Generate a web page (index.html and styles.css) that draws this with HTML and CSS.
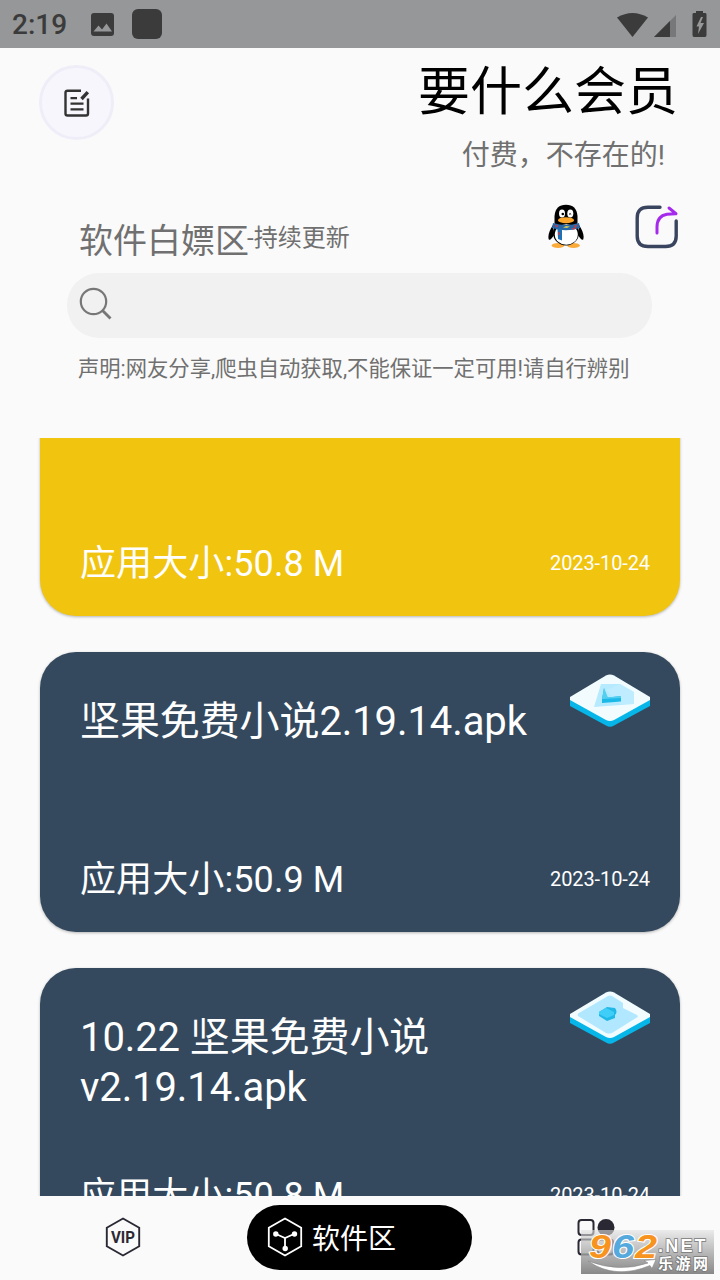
FILE: index.html
```
<!DOCTYPE html>
<html lang="zh-CN">

<head>
    <meta charset="utf-8" />
    <title>软件区</title>
    <meta name="viewport" content="width=device-width, initial-scale=1">
    <link rel="stylesheet" href="styles.css">
</head>

<body>
    <div class="statusbar">
        <span class="clock">2:19</span>
        <svg class="st-image" width="24" height="24" viewBox="0 0 24 24">
            <rect x="1" y="1" width="23" height="23" rx="3" fill="#3b3b3b" />
            <path d="M3.5 19.5l5-6 3.5 4 4.5-6 5.500 8z" fill="#969798" />
        </svg>
        <span class="st-block"></span>
        <svg class="st-right" width="92" height="28" viewBox="0 0 92 28">
            <path d="M0 7.500Q15.500-1.500 31 7.500L15.500 27z" fill="#3b3b3b" />
            <path d="M59 5v22H37z" fill="#77787a" />
            <path d="M53 11v16H37z" fill="#3b3b3b" />
            <path d="M76.500 3H79V1h7v2H88.500q1 0 1 1.500v20.500q0 2-1.500 2H77q-1.500 0-1.500-2V4.500q0-1.500 1-1.500z" fill="#3b3b3b" />
            <path d="M84 7l-4.500 9.500h2.500l-1 7.500 6-11h-3.500l2.500-6z" fill="#969798" />
        </svg>
    </div>

    <div class="header">
        <div class="note-btn">
            <svg width="28" height="30" viewBox="0 0 28 30" fill="none" stroke="#333" stroke-width="2.400">
                <path d="M18 2.700H4.500Q2.500 2.700 2.500 4.500V25.500Q2.500 27.500 4.500 27.500H23Q25 27.500 25 25.500V10.500" />
                <path d="M7.500 10.200h6.500M7.500 15.700h13M7.500 21.300h13" stroke-width="2.200" />
                <path d="M18.500 11l6.300-6.800" stroke-width="3.400" />
            </svg>
        </div>
        <div class="heading">
            <h1>要什么会员</h1>
            <p>付费，不存在的!</p>
        </div>
    </div>

    <div class="section-row">
        <div class="section-title">软件白嫖区<small>-持续更新</small></div>
        <svg class="penguin" width="36" height="45" viewBox="0 0 36 45">
            <ellipse cx="10" cy="41.600" rx="6.300" ry="2.500" fill="#fbab3a" />
            <ellipse cx="25.500" cy="41.600" rx="6.300" ry="2.500" fill="#fbab3a" />
            <path d="M5 21Q-1 30 .8 35.500Q2.500 37 6 31zM31 21Q37 30 35.200 35.500Q33.500 37 30 31z" fill="#000" />
            <ellipse cx="18" cy="29" rx="13" ry="12.500" fill="#000" />
            <path d="M6.500 19V12Q7.500.8 18 .8T29.500 12V19Q29 25 18 25T6.500 19z" fill="#000" />
            <ellipse cx="18.300" cy="30.500" rx="11.500" ry="10.300" fill="#fff" />
            <path d="M5 19Q18 23 31 19L32 24Q18 28.500 4 24z" fill="#2866a5" />
            <path d="M9.500 24l4.500 1.500v11l-4-1.500z" fill="#1f70b5" />
            <path d="M7 21.500l3 1M26 22.500l3-1M11 28v3M24 25l4-1" stroke="#b84352" stroke-width="1.600" />
            <path d="M15 23.500l3-1.500 4 .5-3 1.500z" fill="#d5c957" />
            <ellipse cx="14" cy="9.600" rx="3" ry="4" fill="#fff" />
            <ellipse cx="22.300" cy="9.600" rx="3" ry="4" fill="#fff" />
            <circle cx="14.800" cy="10" r="1.300" fill="#000" />
            <path d="M21 10.500q1-2 2.200 0" stroke="#000" fill="none" />
            <ellipse cx="18" cy="16.200" rx="8" ry="3" fill="#faa52b" />
        </svg>
        <svg class="share" width="44" height="44" viewBox="0 0 44 44" fill="none" stroke-width="3.400" stroke-linecap="round" stroke-linejoin="round">
            <path d="M25 2.200H13Q2.200 2.200 2.200 13V31Q2.200 41.500 13 41.500H30.500Q41.200 41.500 41.200 31V16" stroke="#39445f" />
            <path d="M22 28V22Q22 11 32 9.300L40.500 8.700M34 3l7 5.700" stroke="#a52bec" stroke-width="3" />
        </svg>
    </div>

    <div class="search">
        <svg width="34" height="34" viewBox="0 0 34 34" fill="none" stroke="#777">
            <circle cx="14.500" cy="14.500" r="12.700" stroke-width="2.200" />
            <path d="M23.500 23.500l8 8" stroke-width="2.800" />
        </svg>
    </div>
    <p class="notice">声明:网友分享,爬虫自动获取,不能保证一定可用!请自行辨别</p>

    <div class="list">
        <div class="card yellow">
            <div class="card-foot"><span class="size">应用大小:50.8 M</span><span class="date">2023-10-24</span></div>
        </div>
        <div class="card">
            <div class="card-head">
                <div class="name">坚果免费小说2.19.14.apk</div>
                <svg width="80" height="54" viewBox="0 0 80 54">
                    <path d="M0 24L36 2Q40 0 44 2L80 24V32L44 51.500Q40 54 36 51.500L0 32z" fill="#06b6e8" />
                    <path d="M0 23L36 1.500Q40-.5 44 1.500L80 23V26L44 46Q40 48 36 46L0 26z" fill="#f2fcff" />
                    <path d="M31 10H50L64 18V30L24 33z" fill="#b5eaff" />
                    <path d="M50 10L64 18V30H50L36 16z" fill="#caf0ff" opacity=".5" />
                    <path d="M34 14l-2 11v4l19-1.500v-5.500l-13 1.500-2-1z" fill="#1bb9e8" />
                    <path d="M34 14l-2 11 19-1v-2l-13 1.500z" fill="#55cff0" />
                </svg>
            </div>
            <div class="card-foot"><span class="size">应用大小:50.9 M</span><span class="date">2023-10-24</span></div>
        </div>
        <div class="card">
            <div class="card-head">
                <div class="name">10.22 坚果免费小说v2.19.14.apk</div>
                <svg class="low" width="80" height="54" viewBox="0 0 80 54">
                    <path d="M0 24L36 2Q40 0 44 2L80 24V32L44 51.500Q40 54 36 51.500L0 32z" fill="#06b6e8" />
                    <path d="M0 23L36 1.500Q40-.5 44 1.500L80 23V26L44 46Q40 48 36 46L0 26z" fill="#f2fcff" />
                    <path d="M9 22L38 5Q40 4 42 5L53 12V17L67 24Q69 26 66 27L42 42Q39 43 36 42L8 25Q7 23 9 22z" fill="#b1e8ff" />
                    <path d="M29 21L37 16 45 17Q48 21 45 24V27L37 30 29 25z" fill="#20b8e6" />
                    <path d="M29 21L36 17 44 21V24L37 27 29 23z" fill="#3fcef8" />
                </svg>
            </div>
            <div class="card-foot"><span class="size">应用大小:50.8 M</span><span class="date">2023-10-24</span></div>
        </div>
    </div>

    <div class="tabbar">
        <div class="tab">
            <svg width="36" height="40" viewBox="0 0 36 40">
                <path d="M18 1.500L34.200 10.700V29.300L18 38.500 1.800 29.300V10.700z" fill="none" stroke="#2a2833" stroke-width="1.900" />
                <text x="18" y="25.500" text-anchor="middle" class="vip" textLength="24" lengthAdjust="spacingAndGlyphs">VIP</text>
            </svg>
        </div>
        <div class="tab active">
            <svg width="36" height="40" viewBox="0 0 36 40" stroke="#fff" stroke-width="1.800" fill="none">
                <path d="M18 1.500L34.200 10.700V29.300L18 38.500 1.800 29.300V10.700z" />
                <path d="M9 17l9 4 9-4M18 21v10" />
                <g fill="#fff" stroke="none">
                    <circle cx="8.800" cy="17" r="2.700" />
                    <circle cx="27.500" cy="17" r="2.700" />
                    <circle cx="18.200" cy="31.500" r="2.700" />
                </g>
            </svg>
            <span>软件区</span>
        </div>
        <div class="tab">
            <svg width="38" height="38" viewBox="0 0 38 38" fill="none" stroke="#2a2833" stroke-width="2">
                <rect x="1.500" y="2" width="15" height="15" rx="3" />
                <rect x="1.500" y="21.500" width="15" height="15" rx="3" />
                <rect x="21" y="21.500" width="15" height="15" rx="3" />
                <circle cx="29" cy="9.500" r="8.500" fill="#2a2833" stroke="none" />
            </svg>
        </div>
    </div>

    <div class="watermark">
        <svg width="133" height="44" viewBox="0 0 133 44">
            <g class="wm-num">
                <text x="8" y="27.500" fill="#f79420" textLength="22" lengthAdjust="spacingAndGlyphs">9</text>
                <text x="31" y="27.500" fill="#55a9dc" textLength="22" lengthAdjust="spacingAndGlyphs">6</text>
                <text x="54" y="27.500" fill="#f79420" textLength="22" lengthAdjust="spacingAndGlyphs">2</text>
            </g>
            <path d="M7 31Q38 43 67 33l-4-2.500 12-1-4 9-2-3Q34 50 7 31z" fill="#fff" stroke="#888" stroke-width=".6" />
            <text x="77" y="21.500" class="wm-net">.NET</text>
            <text x="77" y="39" class="wm-cn">乐游网</text>
        </svg>
    </div>
</body>

</html>
```
FILE: styles.css
```
* {
    box-sizing: border-box;
}

body {
    margin: 0;
    height: 1280px;
    overflow: hidden;
    display: flex;
    flex-direction: column;
    position: relative;
    background: #fafafa;
    color: #707070;
    font-family: Roboto, "Noto Sans CJK SC", sans-serif;
}

h1, p {
    margin: 0;
    font-weight: normal;
}

svg {
    display: block;
    flex: none;
}

.statusbar {
    height: 48px;
    flex: none;
    display: flex;
    align-items: center;
    padding: 0 11px 0 12px;
    background: #969798;
    color: #3b3b3b;
}

.clock {
    width: 78px;
    font-size: 28px;
    font-weight: 500;
    line-height: 48px;
    padding-top: 2px;
}

.st-block {
    width: 30px;
    height: 30px;
    margin-left: 18px;
    border-radius: 6px;
    background: #3b3b3b;
}

.st-right {
    margin-left: auto;
}

.header {
    height: 152px;
    flex: none;
    display: flex;
    justify-content: space-between;
    padding: 17px 42px 0 39px;
}

.note-btn {
    width: 75px;
    height: 75px;
    display: flex;
    align-items: center;
    justify-content: center;
    border: 3px solid #efeef8;
    border-radius: 50%;
    background: #f7f6fd;
}

.heading {
    text-align: right;
    margin-top: -3px;
}

.heading h1 {
    color: #000;
    font-size: 52px;
    line-height: 62px;
}

.heading p {
    font-size: 28px;
    line-height: 34px;
    margin-top: 15px;
    padding-right: 13px;
}

.section-row {
    height: 73px;
    flex: none;
    display: flex;
    padding: 4px 41px 0 79px;
}

.section-title {
    display: flex;
    margin-top: 14px;
    font-size: 34px;
    line-height: 46px;
}

.section-title small {
    margin-left: -2px;
    font-size: 24px;
    line-height: 41px;
}

.penguin {
    margin-left: auto;
}

.share {
    margin: 1px 0 0 51px;
}

.search {
    width: 585px;
    height: 65px;
    flex: none;
    margin-left: 67px;
    padding: 14px 12px;
    border-radius: 32px;
    background: #f1f1f1;
}

.notice {
    height: 100px;
    flex: none;
    padding: 15px 0 0 78px;
    font-size: 21.300px;
    line-height: 32px;
    white-space: nowrap;
}

.list {
    height: 758px;
    flex: none;
    display: flex;
    flex-direction: column;
    justify-content: flex-end;
    gap: 36px;
    padding: 0 40px;
    overflow: hidden;
}

.card {
    height: 280px;
    flex: none;
    display: flex;
    flex-direction: column;
    padding: 22px 30px 31px 40px;
    border-radius: 36px;
    background: #34495e;
    color: #fff;
    box-shadow: 0 1px 3px rgba(0, 0, 0, 0.28);
}

/* the list is scrolled: last card runs under the tab bar */
.card:last-child {
    margin-bottom: -52px;
}

.card.yellow {
    background: #f1c40f;
}

.card-head {
    display: flex;
    justify-content: space-between;
}

.card-head .low {
    margin-top: 1px;
}

.name {
    width: 460px;
    margin-top: 23px;
    font-size: 40px;
    line-height: 50px;
    letter-spacing: -0.1px;
}

.card-foot {
    height: 44px;
    margin-top: auto;
    display: flex;
    align-items: center;
    justify-content: space-between;
}

.size {
    padding-top: 2px;
    font-size: 36px;
    line-height: 44px;
    letter-spacing: 0.1px;
}

.date {
    font-size: 20px;
    letter-spacing: -0.1px;
}

.tabbar {
    height: 84px;
    flex: none;
    display: grid;
    grid-template-columns: 247px 225px 248px;
    align-items: center;
    padding-bottom: 2px;
    background: #fafafa;
}

.tab {
    display: flex;
    align-items: center;
    justify-content: center;
    height: 65px;
    padding-right: 1px;
}

.tab.active {
    justify-content: flex-start;
    padding-left: 20px;
    gap: 9px;
    border-radius: 33px;
    background: #000;
    color: #fff;
    font-size: 28px;
}

.vip {
    font-size: 16px;
    font-weight: bold;
    fill: #2a2833;
}

.watermark {
    position: absolute;
    left: 581px;
    top: 1230px;
    width: 133px;
    height: 44px;
    background: linear-gradient(rgba(225, 225, 225, 0.6), rgba(130, 130, 130, 0.95));
}

.watermark svg {
    overflow: visible;
}

.wm-num {
    font: italic bold 33px "Liberation Sans", sans-serif;
    stroke: #fff;
    stroke-width: 2px;
    paint-order: stroke;
}

.wm-net {
    font: bold 18px "Liberation Sans", sans-serif;
    letter-spacing: 2.200px;
    fill: #fff;
    stroke: #777;
    stroke-width: 1.500px;
    paint-order: stroke;
}

.wm-cn {
    font: bold 15px "Noto Sans CJK SC", sans-serif;
    letter-spacing: 2.500px;
    fill: #fff;
    stroke: #777;
    stroke-width: 1.500px;
    paint-order: stroke;
}
```
